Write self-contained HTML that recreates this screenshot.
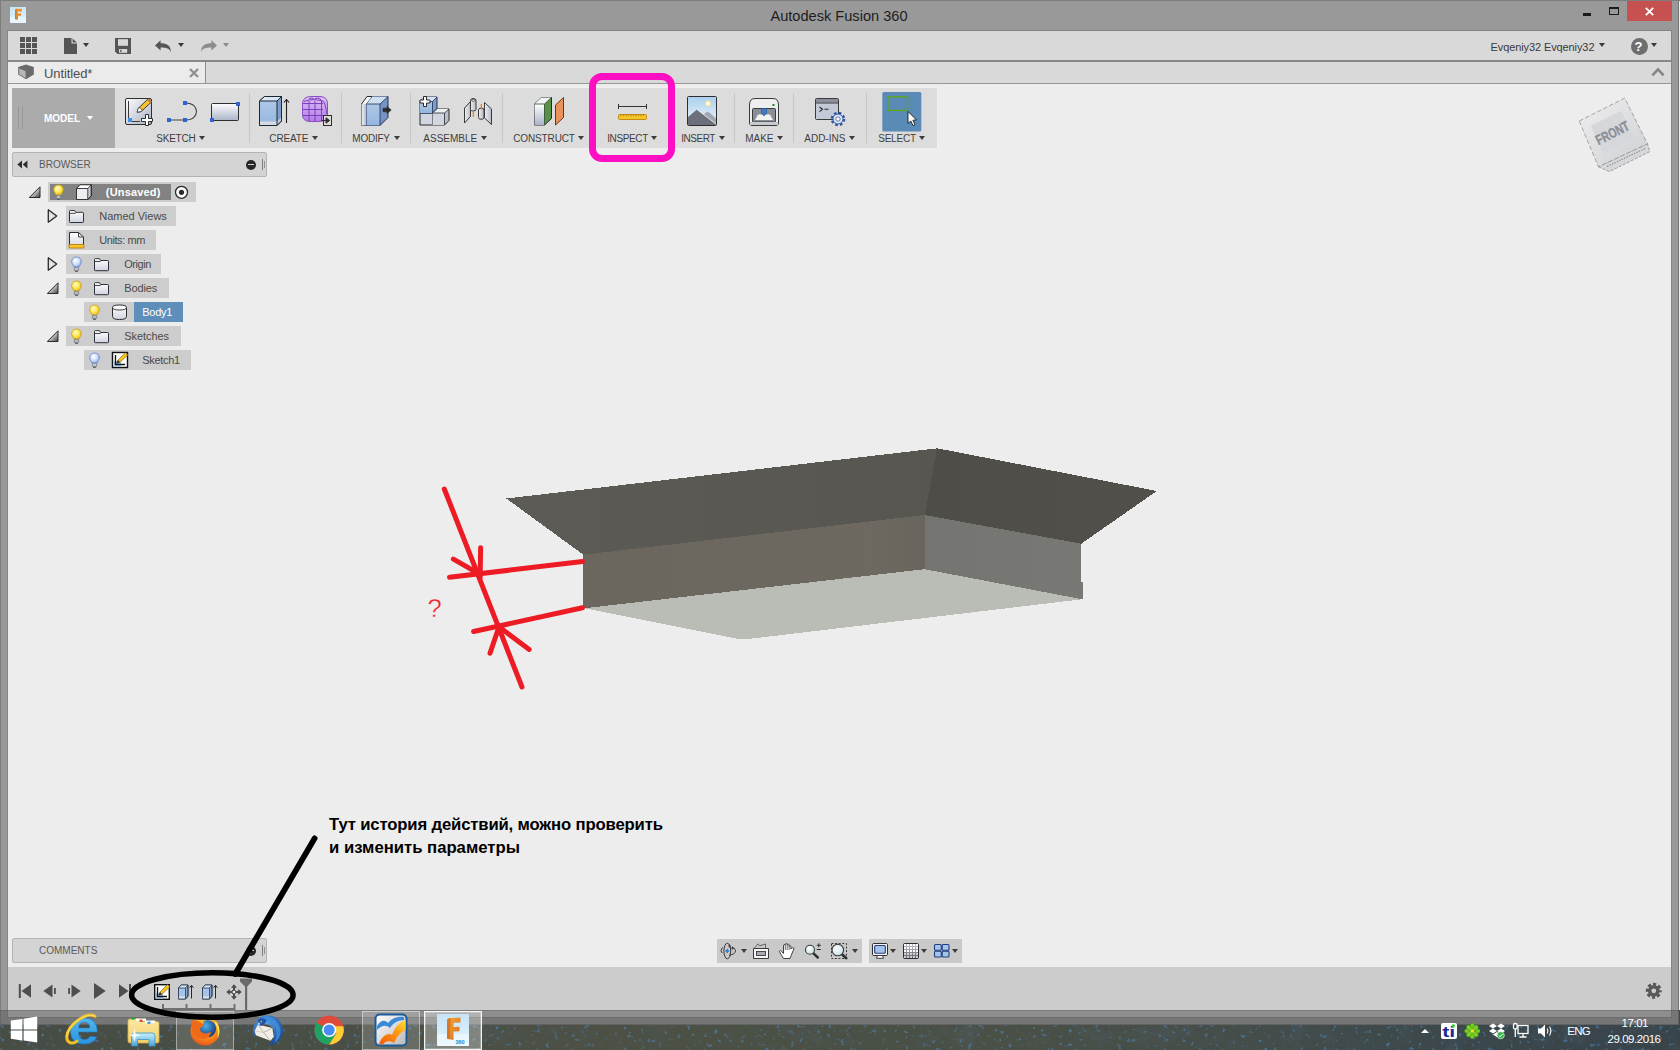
<!DOCTYPE html>
<html lang="en">
<head>
<meta charset="utf-8">
<title>Autodesk Fusion 360</title>
<style>
*{box-sizing:border-box;margin:0;padding:0}
html,body{width:1680px;height:1050px;overflow:hidden}
body{position:relative;background:#999999;font-family:"Liberation Sans",sans-serif;font-size:11px;color:#4a4a4a}
.abs{position:absolute}
.t{position:absolute;white-space:nowrap;line-height:1}
svg{position:absolute;overflow:visible}
/* window frame */
#edgeL{left:0;top:0;width:1px;height:1050px;background:#7d7d7d}
#edgeT{left:0;top:0;width:1680px;height:1px;background:#7d7d7d}
#edgeR{left:1679px;top:0;width:1px;height:1010px;background:#f0f1f5}
#edgeR2{left:1678px;top:0;width:1px;height:1025px;background:#727272}
#title{left:0;top:8.6px;width:1678px;text-align:center;font-size:14.6px;color:#1e1e1e}
#closeb{left:1627px;top:1px;width:45px;height:20px;background:#c75050}
/* content */
#content{left:7px;top:30px;width:1665px;height:988px;background:#ededed;border:1px solid #858585}
#qat{left:8px;top:31px;width:1663px;height:29px;background:#d9d9d9}
#qatline{left:8px;top:60px;width:1663px;height:2px;background:#888888}
#tabbar{left:8px;top:62px;width:1663px;height:21px;background:#d9d9d9}
#tab{left:8px;top:62px;width:198px;height:21px;background:#ebebeb;border-right:1px solid #8c8c8c}
#tabline{left:8px;top:83px;width:1663px;height:1px;background:#979797;box-shadow:0 1px 0 #f3f3f3}
#canvas{left:8px;top:84px;width:1663px;height:883px;background:#ededed}
#timeline{left:8px;top:967px;width:1663px;height:50px;background:#cccccc}
/* ribbon */
#ribbon{left:12px;top:88px;width:925px;height:60px;background:#dcdcdc;box-shadow:0 0 0 1px #f0f0f0}
#model{left:12px;top:88px;width:103px;height:60px;background:#ababab}
.sep{position:absolute;top:93px;width:1px;height:50px;background:#c6c6c6}
.rl{position:absolute;top:132.5px;font-size:10px;color:#3e3e3e;white-space:nowrap;line-height:12px}
.tri2{position:absolute;width:0;height:0;border-left:3.5px solid transparent;border-right:3.5px solid transparent;border-top:4px solid #3c3c3c}
.tri{position:absolute;width:0;height:0;border-left:3.7px solid transparent;border-right:3.7px solid transparent;border-top:4.8px solid #3c3c3c}
/* browser */
#browser{left:12px;top:152px;width:255px;height:25px;background:#d4d4d4;border:1px solid #b4b4b4;border-radius:2px}
.row{position:absolute;height:20px;background:#cdcdcd}
.rt{position:absolute;font-size:11px;color:#4a4a4a;white-space:nowrap;line-height:12px}
#comments{left:12px;top:938px;width:255px;height:25px;background:#d4d4d4;border:1px solid #b4b4b4;border-radius:2px}
.nav{position:absolute;top:939px;height:24px;background:#c9c9c9}
/* taskbar */
.tbtn{position:absolute;top:1011px;height:39px;width:58px;border:1px solid rgba(255,255,255,.45);background:rgba(255,255,255,.12)}
</style>
</head>
<body>
<!-- FRAME -->
<div class="abs" id="edgeR"></div><div class="abs" id="edgeR2"></div>
<div class="abs" id="edgeL"></div><div class="abs" id="edgeT"></div>
<div class="t" id="title">Autodesk Fusion 360</div>
<div class="abs" id="closeb"></div>
<div class="abs" id="content"></div>
<div class="abs" id="qat"></div>
<div class="abs" id="qatline"></div>
<div class="abs" id="tabbar"></div>
<div class="abs" id="tab"></div>
<div class="abs" id="tabline"></div>
<div class="abs" id="canvas"></div>
<div class="abs" id="timeline"></div>
<!--QAT-S-->
<!-- title icons -->
<svg style="left:10px;top:7px" width="16" height="16" viewBox="0 0 16 16">
 <defs><linearGradient id="fbg" x1="0" y1="0" x2="0" y2="1"><stop offset="0" stop-color="#c9e6f6"/><stop offset="0.6" stop-color="#d6edf8"/><stop offset="0.62" stop-color="#e6f4fb"/><stop offset="1" stop-color="#eaf6fc"/></linearGradient>
 <linearGradient id="fo" x1="0" y1="0" x2="1" y2="1"><stop offset="0" stop-color="#f6a63c"/><stop offset="1" stop-color="#d9761b"/></linearGradient></defs>
 <rect width="16" height="16" fill="url(#fbg)"/>
 <path d="M5 3.2 Q5 1.8 6.6 1.8 L11.8 1.8 L11.8 4.4 L8 4.4 L8 6.4 L11 6.4 L11 8.8 L8 8.8 L8 12.8 L5 12.2 Z" fill="url(#fo)"/>
 <path d="M5 3.2 Q5 1.8 6.6 1.8 L7 1.8 L6.2 12.45 L5 12.2 Z" fill="#c8661a" opacity=".55"/>
</svg>
<div class="abs" style="left:1583px;top:13px;width:8px;height:2.5px;background:#1a1a1a"></div>
<div class="abs" style="left:1609px;top:7px;width:10px;height:8px;border:1px solid #1a1a1a;border-top-width:2px"></div>
<svg style="left:1645px;top:7px" width="9" height="9" viewBox="0 0 9 9"><path d="M0.8 0.8 L8.2 8.2 M8.2 0.8 L0.8 8.2" stroke="#ffffff" stroke-width="1.9" fill="none"/></svg>
<!-- QAT -->
<svg style="left:20px;top:37px" width="17" height="17" viewBox="0 0 17 17" fill="#555555">
 <rect x="0" y="0" width="5" height="5"/><rect x="6" y="0" width="5" height="5"/><rect x="12" y="0" width="5" height="5"/>
 <rect x="0" y="6" width="5" height="5"/><rect x="6" y="6" width="5" height="5"/><rect x="12" y="6" width="5" height="5"/>
 <rect x="0" y="12" width="5" height="5"/><rect x="6" y="12" width="5" height="5"/><rect x="12" y="12" width="5" height="5"/>
</svg>
<svg style="left:64px;top:38px" width="13" height="16" viewBox="0 0 13 16"><path d="M0 0 H7.5 V5.5 H13 V16 H0 Z" fill="#555555"/><path d="M8.6 0.4 L12.8 4.5 H8.6 Z" fill="#555555"/></svg>
<div class="tri" style="left:83px;top:43.2px;border-top-color:#3a3a3a"></div>
<svg style="left:115px;top:38px" width="16" height="16" viewBox="0 0 16 16"><path d="M0 0 H16 V16 H2.6 L0 13.4 Z" fill="#555555"/><rect x="3" y="1.2" width="10" height="6.6" fill="#d9d9d9"/><rect x="4" y="11" width="8.2" height="3.8" fill="#d9d9d9"/><rect x="5.2" y="11.8" width="1.3" height="2.2" fill="#555555"/></svg>
<svg style="left:155px;top:39.5px" width="17" height="13" viewBox="0 0 17 13"><path d="M0 5.4 L5.6 0.2 V3.2 C11.5 3.2 16.2 5.2 15.8 12.4 C14.6 8.4 11.5 7.6 5.6 7.6 V10.6 Z" fill="#555555"/></svg>
<div class="tri" style="left:178px;top:43.2px;border-top-color:#3a3a3a"></div>
<svg style="left:199.5px;top:39.5px" width="17" height="13" viewBox="0 0 17 13"><path d="M17 5.4 L11.4 0.2 V3.2 C5.5 3.2 0.8 5.2 1.2 12.4 C2.4 8.4 5.5 7.6 11.4 7.6 V10.6 Z" fill="#8c8c8c"/></svg>
<div class="tri" style="left:223px;top:43.2px;border-top-color:#8c8c8c"></div>
<div class="t" style="left:1490.5px;top:40.5px;font-size:11px;color:#3a3a3a;line-height:12px;letter-spacing:-0.1px">Evqeniy32 Evqeniy32</div>
<div class="tri" style="left:1598.5px;top:43.2px;border-top-color:#3a3a3a"></div>
<div class="abs" style="left:1630.5px;top:37.5px;width:17px;height:17px;border-radius:50%;background:#6e6e6e"></div>
<div class="t" style="left:1634.6px;top:39.5px;font-size:13px;font-weight:bold;color:#ffffff;line-height:13px">?</div>
<div class="tri" style="left:1651px;top:43.2px;border-top-color:#3a3a3a"></div>
<svg style="left:1651px;top:67px" width="14" height="10" viewBox="0 0 14 10"><path d="M1.4 8.4 L7 2.4 L12.6 8.4" stroke="#858585" stroke-width="2.6" fill="none"/></svg>
<!-- tab -->
<svg style="left:18px;top:64px" width="16" height="16" viewBox="0 0 16 16"><path d="M0.2 3 L8 0.6 L15.8 3 V10.6 L8 15.2 L0.2 10.6 Z" fill="#6a6a6a"/><path d="M1.2 4.4 L7.6 7.2 V14 L1.2 10.2 Z" fill="#b5b7b5"/></svg>
<div class="t" style="left:44px;top:67px;font-size:13px;color:#4e4e4e;line-height:13px;letter-spacing:-0.1px">Untitled*</div>
<svg style="left:189px;top:68px" width="10" height="10" viewBox="0 0 10 10"><path d="M1 1 L9 9 M9 1 L1 9" stroke="#909090" stroke-width="2.4" fill="none"/></svg>
<!--QAT-E-->
<!--RIBBON-S-->
<div class="abs" id="ribbon"></div>
<div class="abs" id="model"></div>
<div class="abs" style="left:18px;top:106px;width:1px;height:23px;background:#989898"></div>
<div class="abs" style="left:22px;top:106px;width:1px;height:23px;background:#989898"></div>
<div class="t" style="left:44px;top:112.5px;font-size:10px;font-weight:bold;color:#ffffff;line-height:12px">MODEL</div>
<div class="tri2" style="left:86.5px;top:116px;border-top-color:#ffffff"></div>
<div class="sep" style="left:249px"></div><div class="sep" style="left:341px"></div><div class="sep" style="left:410px"></div><div class="sep" style="left:502px"></div>
<div class="sep" style="left:734px"></div><div class="sep" style="left:793px"></div><div class="sep" style="left:866px"></div>
<div class="rl" style="left:156.3px;letter-spacing:-0.23px">SKETCH</div><div class="tri2" style="left:198.5px;top:136px"></div>
<div class="rl" style="left:269.3px;letter-spacing:-0.13px">CREATE</div><div class="tri2" style="left:311.5px;top:136px"></div>
<div class="rl" style="left:352.3px;letter-spacing:-0.23px">MODIFY</div><div class="tri2" style="left:393.5px;top:136px"></div>
<div class="rl" style="left:423.3px">ASSEMBLE</div><div class="tri2" style="left:480.5px;top:136px"></div>
<div class="rl" style="left:513.2px;letter-spacing:-0.13px">CONSTRUCT</div><div class="tri2" style="left:577.5px;top:136px"></div>
<div class="rl" style="left:607.2px;letter-spacing:-0.37px">INSPECT</div><div class="tri2" style="left:650.5px;top:136px"></div>
<div class="rl" style="left:681.3px;letter-spacing:-0.50px">INSERT</div><div class="tri2" style="left:718.5px;top:136px"></div>
<div class="rl" style="left:745.2px">MAKE</div><div class="tri2" style="left:776.5px;top:136px"></div>
<div class="rl" style="left:804.3px">ADD-INS</div><div class="tri2" style="left:848.5px;top:136px"></div>
<div class="rl" style="left:878.2px;letter-spacing:-0.22px">SELECT</div><div class="tri2" style="left:918.5px;top:136px"></div>
<svg style="left:0;top:0" width="1680" height="160" viewBox="0 0 1680 160">
<defs>
 <linearGradient id="gw" x1="0" y1="0" x2="0" y2="1"><stop offset="0" stop-color="#ffffff"/><stop offset="1" stop-color="#aab3c8"/></linearGradient>
 <linearGradient id="gw2" x1="0" y1="0" x2="1" y2="1"><stop offset="0" stop-color="#fdfdfe"/><stop offset="1" stop-color="#a9b1c4"/></linearGradient>
 <linearGradient id="gb" x1="0" y1="0" x2="0" y2="1"><stop offset="0" stop-color="#adc8e6"/><stop offset="1" stop-color="#94b6de"/></linearGradient>
 <linearGradient id="gg" x1="0" y1="0" x2="1" y2="0"><stop offset="0" stop-color="#eef0f4"/><stop offset="1" stop-color="#b4bac8"/></linearGradient>
 <linearGradient id="gp" x1="0" y1="0" x2="0" y2="1"><stop offset="0" stop-color="#dcc0f6"/><stop offset="1" stop-color="#b57be6"/></linearGradient>
 <linearGradient id="gsky" x1="0" y1="0" x2="0" y2="1"><stop offset="0" stop-color="#a9d0ee"/><stop offset="1" stop-color="#eef6fb"/></linearGradient>
</defs>
<!-- SKETCH 1 -->
<rect x="125.5" y="98.5" width="26" height="26" rx="1.5" fill="url(#gw2)" stroke="#2e2e2e"/>
<path d="M128.5 101 V121.5 H140" stroke="#3a3a3a" stroke-width="1" fill="none"/>
<rect x="128" y="118" width="4" height="4" fill="#3d8fe6"/>
<path d="M137.2 112.2 L138 108.6 L148.4 98.6 L151.6 101.8 L141 111.6 Z" fill="#f6c32c" stroke="#2e2e2e" stroke-width=".9"/>
<path d="M137.2 112.2 L138 108.6 L140 107.4 L142 110.4 L141 111.6 Z" fill="#ffffff" stroke="#2e2e2e" stroke-width=".7"/>
<path d="M147 100 L148.6 98.4 L151.8 101.6 L150.2 103.2 Z" fill="#c9813a"/>
<path d="M145.5 114.5 h3 v4 h4 v3 h-4 v4 h-3 v-4 h-4 v-3 h4 z" fill="#ffffff" stroke="#2e2e2e" stroke-width="1"/>
<!-- SKETCH 2 -->
<path d="M169 120 H186 C200 120 200 103 186 103" stroke="#444444" stroke-width="1.1" fill="none"/>
<rect x="167" y="118" width="4" height="4" fill="#2f62d2"/><rect x="183" y="118" width="4" height="4" fill="#2f62d2"/><rect x="183" y="101" width="4" height="4" fill="#2f62d2"/>
<!-- SKETCH 3 -->
<rect x="211.5" y="103.5" width="27" height="17" rx="1" fill="url(#gw)" stroke="#2e2e2e"/>
<rect x="236" y="102" width="4" height="4" fill="#2f62d2"/><rect x="210" y="118" width="4" height="4" fill="#2f62d2"/>
<!-- CREATE 1 extrude -->
<path d="M259.5 101 L264.5 96.5 H281.5 V121 L277 125.5 H259.5 Z" fill="#7f9dc9" stroke="#1f2733" stroke-width="1" stroke-linejoin="round"/>
<path d="M259.5 101 L264.5 96.5 H281.5 L277 101 Z" fill="#d9e6f4"/>
<rect x="259.5" y="101" width="17.5" height="24.5" fill="url(#gb)"/>
<rect x="259.5" y="121.5" width="17.5" height="4" fill="#d5dae4"/>
<path d="M277 121.5 L281.5 117 V121 L277 125.5 Z" fill="#c3cad8"/>
<path d="M259.5 101 L264.5 96.5 H281.5 V121 L277 125.5 H259.5 Z M259.5 101 H277 L281.5 96.5 M277 101 V125.5" fill="none" stroke="#1f2733" stroke-width="1" stroke-linejoin="round"/>
<path d="M286.5 123 V100 M283.8 102.5 L286.5 99.6 L289.2 102.5" stroke="#222" stroke-width="1.1" fill="none"/>
<!-- CREATE 2 form -->
<path d="M302.5 104 Q302.5 96.5 311 96.5 H320 Q327.5 96.5 327.5 104 V114 Q327.5 121.5 319 121.5 H310 Q302.5 121.5 302.5 114 Z" fill="url(#gp)" stroke="#8a4fc8" stroke-width="1"/>
<path d="M303 103.5 H323 M303 109.5 H323 M303 115.5 H323 M309 101 V121 M315 101 V121 M321.5 101 V121 M304 101.5 Q312 98 323 101 Q326 104 326.5 114 M309 99 Q312 97 314 99 M315 98.5 Q318 97 321 99.5" stroke="#7a3fba" stroke-width="1" fill="none"/>
<rect x="323.5" y="115.5" width="8" height="10" fill="#dcdcdc" stroke="#2e2e2e" stroke-width="1"/>
<path d="M321.5 120.5 H326 M326 117.8 L329.6 120.5 L326 123.2 Z" stroke="#2e2e2e" stroke-width="1" fill="#2e2e2e"/>
<!-- MODIFY -->
<path d="M361.5 104 L367 96.5 H372 V118 L366.5 125.5 H361.5 Z" fill="#f4f5f8" stroke="#2a2a2a" stroke-width="1" stroke-linejoin="round"/>
<path d="M361.5 104 H366.5 V125.5 H361.5 Z" fill="url(#gg)"/>
<path d="M366.5 104 L372.5 96.5 H388 V117.5 L380 125.5 H366.5 Z" fill="#7594c4" stroke="#1f2f55" stroke-width="1" stroke-linejoin="round"/>
<path d="M366.5 104 L372.5 96.5 H388 L380 104 Z" fill="#cfe0f2"/>
<rect x="366.5" y="104" width="13.5" height="21.5" fill="url(#gb)"/>
<path d="M366.5 104 H380 L388 96.5 M380 104 V125.5" fill="none" stroke="#1f2f55" stroke-width=".8"/>
<path d="M383 108.2 H387 V106.4 L391.2 110 L387 113.6 V111.8 H383 Z" fill="#2b2b2b" stroke="#2b2b2b" stroke-width=".6"/>
<!-- ASSEMBLE 1 -->
<path d="M420 113 H432.5 V125 H420 Z" fill="#d2d6e0" stroke="#2a2a2a" stroke-width="1"/>
<path d="M432.5 113 L437 109 H449 V120.5 L444.5 125 H432.5 Z" fill="#b9bfcd" stroke="#2a2a2a" stroke-width="1" stroke-linejoin="round"/>
<path d="M432.5 113 L437 109 H449 L444.5 113 Z" fill="#eef0f4"/>
<rect x="432.5" y="113" width="12" height="12" fill="#d2d6e0"/>
<path d="M432.5 113 H444.5 L449 109 M444.5 113 V125" fill="none" stroke="#2a2a2a" stroke-width=".8"/>
<path d="M420 101.5 L424.5 97 H437 V108.5 L432.5 113 H420 Z" fill="#7f9dc9" stroke="#1f2f55" stroke-width="1" stroke-linejoin="round"/>
<path d="M420 101.5 L424.5 97 H437 L432.5 101.5 Z" fill="#d4e2f3"/>
<rect x="420" y="101.500" width="12.5" height="11.500" fill="url(#gb)"/>
<path d="M420 101.500 H432.500 L437 97 M432.500 101.500 V113" fill="none" stroke="#1f2f55" stroke-width=".8"/>
<path d="M423.500 96.500 h3 v3.500 h3.500 v3 h-3.500 v3.500 h-3 v-3.500 h-3.500 v-3 h3.500 z" fill="#ffffff" stroke="#2a2a2a" stroke-width="1"/>
<!-- ASSEMBLE 2 joint -->
<path d="M464.500 108 L470.500 101.500 V116.500 L464.500 123 Z" fill="url(#gg)" stroke="#3a3a3a" stroke-width="1" stroke-linejoin="round"/>
<path d="M470.500 100.500 Q470.500 98.500 473.200 98.500 Q476 98.500 476 100.500 V109.500 Q476 111 473.200 111 Q470.500 111 470.500 109.500 Z" fill="url(#gg)" stroke="#3a3a3a" stroke-width="1"/>
<ellipse cx="473.250" cy="100.300" rx="1.700" ry="1" fill="#fff" stroke="#3a3a3a" stroke-width=".8"/>
<path d="M473.300 111.500 V117" stroke="#f07b10" stroke-width="1.200"/>
<path d="M478.500 110 Q478.500 108 481.200 108 Q484 108 484 110 V117.500 Q484 119.300 481.200 119.300 Q478.500 119.300 478.500 117.500 Z" fill="url(#gg)" stroke="#3a3a3a" stroke-width="1"/>
<path d="M481.300 104 V109.500" stroke="#f07b10" stroke-width="1.200"/>
<path d="M484.500 102.500 L491.500 109 V124.500 L484.500 118 Z" fill="url(#gg)" stroke="#3a3a3a" stroke-width="1" stroke-linejoin="round"/>
<!-- CONSTRUCT -->
<path d="M534.500 104 L541.500 97.500 H551.500 V118.500 L544.500 125 H534.500 Z" fill="#5a9048" stroke="#2a2a2a" stroke-width="1" stroke-linejoin="round"/>
<path d="M534.500 104 L541.500 97.500 H551.500 L544.500 104 Z" fill="#f2f3f6"/>
<rect x="534.500" y="104" width="10" height="21" fill="url(#gw)"/>
<path d="M534.500 104 H544.500 L551.500 97.500 M544.500 104 V125" fill="none" stroke="#2a4a22" stroke-width=".8"/>
<path d="M555.500 105 L563.500 97.500 V117.500 L555.500 125 Z" fill="#e9935a" stroke="#7a3010" stroke-width="1" stroke-linejoin="round"/>
<!-- INSPECT -->
<path d="M618.500 104 V109 M646.500 104 V109 M618.500 106.500 H646.500" stroke="#333333" stroke-width="1" fill="none"/>
<rect x="618.500" y="114.500" width="28" height="5" rx="1" fill="#f3c62c" stroke="#c88a10" stroke-width="1"/>
<path d="M621 114.500 v2 M623.500 114.500 v1.500 M626 114.500 v2 M628.500 114.500 v1.500 M631 114.500 v2 M633.500 114.500 v1.500 M636 114.500 v2 M638.500 114.500 v1.500 M641 114.500 v2 M643.500 114.500 v1.500" stroke="#b5780a" stroke-width=".8"/>
<!-- INSERT -->
<rect x="687.500" y="96.500" width="29" height="29" rx="1" fill="url(#gsky)" stroke="#2e2e2e" stroke-width="1"/>
<circle cx="708" cy="103.500" r="2.700" fill="#fffbe2" stroke="#f0d88a" stroke-width="1"/>
<path d="M700 118 L707 111.500 L710 113 L716 118.500 V125 H700 Z" fill="#a0a6b2"/>
<path d="M688 125 V117 L697 109.500 L716 124 V125 Z" fill="#6c707c"/>
<path d="M697 109.500 L716 124" stroke="#e8e8e8" stroke-width="1"/>
<!-- MAKE -->
<path d="M749.500 105 Q749.500 98.500 755 98.500 H773 Q778.500 98.500 778.500 105 V123 Q778.500 125.500 776 125.500 H752 Q749.500 125.500 749.500 123 Z" fill="#eceef0" stroke="#3a3a3a" stroke-width="1"/>
<rect x="752.500" y="108.500" width="23" height="13.500" rx="1" fill="#8a8e96" stroke="#3a3a3a" stroke-width="1"/>
<path d="M755 120 L758 114.500 H770 L773 120 Z" fill="#f2f2f2"/>
<path d="M761.500 108.500 V113 L764 116 L766.500 113 V108.500 Z" fill="#3d7bc8" stroke="#1f4f90" stroke-width=".6"/>
<rect x="772.500" y="104" width="2" height="2" fill="#1a8a1a"/>
<rect x="750" y="122" width="28" height="3" fill="#c6c9ce"/>
<!-- ADD-INS -->
<rect x="815.500" y="98.500" width="23" height="21" rx="1" fill="#c4c9d6" stroke="#3a3a3a" stroke-width="1"/>
<rect x="816" y="99" width="22" height="3.500" fill="#8c909c"/>
<path d="M816 103 H838.500" stroke="#3a3a3a" stroke-width="1"/>
<path d="M819.500 107 L822.500 109.300 L819.500 111.600 M824.500 109.300 H828.500" stroke="#2a2a2a" stroke-width="1.100" fill="none"/>
<circle cx="838" cy="119" r="5" fill="#dfe8f6" stroke="#2f55a0" stroke-width="1"/>
<circle cx="838" cy="119" r="6.200" fill="none" stroke="#2f55a0" stroke-width="2.200" stroke-dasharray="2.600 2.270"/>
<circle cx="838" cy="119" r="2.200" fill="#ffffff" stroke="#2f55a0" stroke-width=".8"/>
<!-- SELECT -->
<rect x="882.300" y="92" width="39" height="39.500" rx="1.500" fill="#5a8ab6"/>
<rect x="887.800" y="96.800" width="19.800" height="13.600" fill="none" stroke="#5aaa0c" stroke-width="1.300"/>
<path d="M908 111.500 V123.500 L910.800 121 L913 125.600 L915 124.700 L912.900 120.200 L916.500 120 Z" fill="#ffffff" stroke="#1a1a1a" stroke-width=".9" stroke-linejoin="round"/>
</svg>
<!--RIBBON-E-->
<!--BROWSER-S-->
<div class="abs" id="browser"></div>
<svg style="left:17px;top:160px" width="11" height="9" viewBox="0 0 11 9"><path d="M5 0.600 V8.400 L0.300 4.500 Z M10.400 0.600 V8.400 L5.700 4.500 Z" fill="#2e2e2e"/></svg>
<div class="t" style="left:39px;top:158.500px;font-size:10px;color:#5a5a5a;line-height:12px">BROWSER</div>
<div class="abs" style="left:245.500px;top:159.500px;width:10px;height:10px;border-radius:50%;background:#262626"></div>
<div class="abs" style="left:247.500px;top:163.700px;width:6px;height:1.600px;background:#d4d4d4"></div>
<div class="abs" style="left:262px;top:159px;width:1px;height:11px;background:#7e7e7e"></div>
<div class="abs" style="left:264px;top:161px;width:1px;height:7px;background:#909090"></div>
<!-- rows -->
<div class="row" style="left:48px;top:182px;width:148px"></div>
<div class="abs" style="left:50px;top:184px;width:121px;height:16px;background:#828282"></div>
<div class="row" style="left:66px;top:206px;width:110px"></div>
<div class="row" style="left:66px;top:230px;width:90px"></div>
<div class="row" style="left:66px;top:254px;width:95px"></div>
<div class="row" style="left:66px;top:278px;width:103px"></div>
<div class="row" style="left:84px;top:302px;width:99px"></div>
<div class="abs" style="left:134px;top:302px;width:49px;height:20px;background:#5d8fba"></div>
<div class="row" style="left:66px;top:326px;width:115px"></div>
<div class="row" style="left:84px;top:350px;width:107px"></div>
<div class="rt" style="left:105.800px;top:186px;font-weight:bold;color:#ffffff;letter-spacing:0.17px">(Unsaved)</div>
<div class="rt" style="left:99.200px;top:210px">Named Views</div>
<div class="rt" style="left:99.200px;top:234px;letter-spacing:-0.42px">Units: mm</div>
<div class="rt" style="left:124.200px;top:258px;letter-spacing:-0.42px">Origin</div>
<div class="rt" style="left:124.200px;top:282px;letter-spacing:-0.12px">Bodies</div>
<div class="rt" style="left:142.200px;top:306px;color:#ffffff;letter-spacing:-0.25px">Body1</div>
<div class="rt" style="left:124.200px;top:330px;letter-spacing:-0.05px">Sketches</div>
<div class="rt" style="left:142.200px;top:354px;letter-spacing:-0.30px">Sketch1</div>
<svg style="left:0;top:0" width="300" height="380" viewBox="0 0 300 380">
<defs>
 <linearGradient id="tg" x1="0" y1="0" x2="1" y2="1"><stop offset="0.350" stop-color="#f0f0f0"/><stop offset="1" stop-color="#3c3c3c"/></linearGradient>
 <radialGradient id="by" cx="0.400" cy="0.350" r="0.700"><stop offset="0" stop-color="#fffbd0"/><stop offset="0.500" stop-color="#ffe85a"/><stop offset="1" stop-color="#e8b818"/></radialGradient>
 <radialGradient id="bb" cx="0.400" cy="0.350" r="0.700"><stop offset="0" stop-color="#ffffff"/><stop offset="0.550" stop-color="#cfe0fb"/><stop offset="1" stop-color="#86a8e8"/></radialGradient>
 <linearGradient id="fg" x1="0" y1="0" x2="0" y2="1"><stop offset="0" stop-color="#ffffff"/><stop offset="1" stop-color="#d0d4e0"/></linearGradient>
</defs>
<g transform="translate(28.5 186)"><path d="M11.500 0.800 V11.500 H0.800 Z" fill="url(#tg)" stroke="#2a2a2a" stroke-width="1" stroke-linejoin="round"/></g>
<g transform="translate(47.5 209)"><path d="M0.800 0.800 V13.200 L9.200 7 Z" fill="#e4e4e4" stroke="#2a2a2a" stroke-width="1.300" stroke-linejoin="round"/></g>
<g transform="translate(47.5 257)"><path d="M0.800 0.800 V13.200 L9.200 7 Z" fill="#e4e4e4" stroke="#2a2a2a" stroke-width="1.300" stroke-linejoin="round"/></g>
<g transform="translate(46.5 282)"><path d="M11.500 0.800 V11.500 H0.800 Z" fill="url(#tg)" stroke="#2a2a2a" stroke-width="1" stroke-linejoin="round"/></g>
<g transform="translate(46.5 330)"><path d="M11.500 0.800 V11.500 H0.800 Z" fill="url(#tg)" stroke="#2a2a2a" stroke-width="1" stroke-linejoin="round"/></g>
<g transform="translate(53 184.5)"><path d="M5.500 0.500 C8.400 0.500 10.300 2.600 10.300 5.200 C10.300 7.400 8.600 8.600 7.900 10.600 H3.100 C2.400 8.600 0.700 7.400 0.700 5.200 C0.700 2.600 2.600 0.500 5.500 0.500 Z" fill="url(#by)" stroke="#c89a10" stroke-width=".8"/><rect x="3.300" y="10.800" width="4.400" height="3.400" rx=".8" fill="#b8bcc4" stroke="#6a6e78" stroke-width=".7"/><rect x="4.200" y="14.200" width="2.600" height="1.200" fill="#55585e"/></g>
<g transform="translate(71 256.5)"><path d="M5.500 0.500 C8.400 0.500 10.300 2.600 10.300 5.200 C10.300 7.400 8.600 8.600 7.900 10.600 H3.100 C2.400 8.600 0.700 7.400 0.700 5.200 C0.700 2.600 2.600 0.500 5.500 0.500 Z" fill="url(#bb)" stroke="#5a80d0" stroke-width=".8"/><rect x="3.300" y="10.800" width="4.400" height="3.400" rx=".8" fill="#c4c8d0" stroke="#6a6e78" stroke-width=".7"/><rect x="4.200" y="14.200" width="2.600" height="1.200" fill="#55585e"/></g>
<g transform="translate(71 280.5)"><path d="M5.500 0.500 C8.400 0.500 10.300 2.600 10.300 5.200 C10.300 7.400 8.600 8.600 7.900 10.600 H3.100 C2.400 8.600 0.700 7.400 0.700 5.200 C0.700 2.600 2.600 0.500 5.500 0.500 Z" fill="url(#by)" stroke="#c89a10" stroke-width=".8"/><rect x="3.300" y="10.800" width="4.400" height="3.400" rx=".8" fill="#b8bcc4" stroke="#6a6e78" stroke-width=".7"/><rect x="4.200" y="14.200" width="2.600" height="1.200" fill="#55585e"/></g>
<g transform="translate(89 304.5)"><path d="M5.500 0.500 C8.400 0.500 10.300 2.600 10.300 5.200 C10.300 7.400 8.600 8.600 7.900 10.600 H3.100 C2.400 8.600 0.700 7.400 0.700 5.200 C0.700 2.600 2.600 0.500 5.500 0.500 Z" fill="url(#by)" stroke="#c89a10" stroke-width=".8"/><rect x="3.300" y="10.800" width="4.400" height="3.400" rx=".8" fill="#b8bcc4" stroke="#6a6e78" stroke-width=".7"/><rect x="4.200" y="14.200" width="2.600" height="1.200" fill="#55585e"/></g>
<g transform="translate(71 328.5)"><path d="M5.500 0.500 C8.400 0.500 10.300 2.600 10.300 5.200 C10.300 7.400 8.600 8.600 7.900 10.600 H3.100 C2.400 8.600 0.700 7.400 0.700 5.200 C0.700 2.600 2.600 0.500 5.500 0.500 Z" fill="url(#by)" stroke="#c89a10" stroke-width=".8"/><rect x="3.300" y="10.800" width="4.400" height="3.400" rx=".8" fill="#b8bcc4" stroke="#6a6e78" stroke-width=".7"/><rect x="4.200" y="14.200" width="2.600" height="1.200" fill="#55585e"/></g>
<g transform="translate(89 352.5)"><path d="M5.500 0.500 C8.400 0.500 10.300 2.600 10.300 5.200 C10.300 7.400 8.600 8.600 7.900 10.600 H3.100 C2.400 8.600 0.700 7.400 0.700 5.200 C0.700 2.600 2.600 0.500 5.500 0.500 Z" fill="url(#bb)" stroke="#5a80d0" stroke-width=".8"/><rect x="3.300" y="10.800" width="4.400" height="3.400" rx=".8" fill="#c4c8d0" stroke="#6a6e78" stroke-width=".7"/><rect x="4.200" y="14.200" width="2.600" height="1.200" fill="#55585e"/></g>
<g transform="translate(69 210)"><path d="M0.500 1.300 Q0.500 0.500 1.300 0.500 H5.600 L6.600 2.300 H13.700 Q14.500 2.300 14.500 3.100 V11.700 Q14.500 12.500 13.700 12.500 H1.300 Q0.500 12.500 0.500 11.700 Z" fill="url(#fg)" stroke="#2c3038" stroke-width="1"/><path d="M0.500 3.300 H6.600" stroke="#2c3038" stroke-width=".9"/></g>
<g transform="translate(94 258.2)"><path d="M0.500 1.300 Q0.500 0.500 1.300 0.500 H5.600 L6.600 2.300 H13.700 Q14.500 2.300 14.500 3.100 V11.700 Q14.500 12.500 13.700 12.500 H1.300 Q0.500 12.500 0.500 11.700 Z" fill="url(#fg)" stroke="#2c3038" stroke-width="1"/><path d="M0.500 3.300 H6.600" stroke="#2c3038" stroke-width=".9"/></g>
<g transform="translate(94 282.2)"><path d="M0.500 1.300 Q0.500 0.500 1.300 0.500 H5.600 L6.600 2.300 H13.700 Q14.500 2.300 14.500 3.100 V11.700 Q14.500 12.500 13.700 12.500 H1.300 Q0.500 12.500 0.500 11.700 Z" fill="url(#fg)" stroke="#2c3038" stroke-width="1"/><path d="M0.500 3.300 H6.600" stroke="#2c3038" stroke-width=".9"/></g>
<g transform="translate(94 330.2)"><path d="M0.500 1.300 Q0.500 0.500 1.300 0.500 H5.600 L6.600 2.300 H13.700 Q14.500 2.300 14.500 3.100 V11.700 Q14.500 12.500 13.700 12.500 H1.300 Q0.500 12.500 0.500 11.700 Z" fill="url(#fg)" stroke="#2c3038" stroke-width="1"/><path d="M0.500 3.300 H6.600" stroke="#2c3038" stroke-width=".9"/></g>
<!-- root cube -->
<path d="M76.500 188.500 L80 184.800 H91.300 V195.800 L87.800 199.500 H76.500 Z" fill="#c9cdd6" stroke="#2e2e2e" stroke-width="1" stroke-linejoin="round"/>
<path d="M76.500 188.500 L80 184.800 H91.300 L87.800 188.500 Z" fill="#ffffff"/><rect x="76.500" y="188.500" width="11.300" height="11" fill="#eceef2"/>
<path d="M76.500 188.500 H87.800 L91.300 184.800 M87.800 188.500 V199.500 M76.500 188.500 L80 184.800 H91.300 V195.800 L87.800 199.500 H76.500 Z" fill="none" stroke="#2e2e2e" stroke-width=".9" stroke-linejoin="round"/>
<!-- radio -->
<circle cx="181.500" cy="192.300" r="6" fill="#ffffff" stroke="#2a2a2a" stroke-width="1.300"/><circle cx="181.500" cy="192.300" r="2.600" fill="#2a2a2a"/>
<!-- units page -->
<path d="M69.500 232.500 H78.500 L83.500 237 V247.500 H69.500 Z" fill="url(#fg)" stroke="#2e2e2e" stroke-width="1" stroke-linejoin="round"/><path d="M78.500 232.500 V237 H83.500" fill="none" stroke="#2e2e2e" stroke-width=".9"/>
<rect x="69" y="244.500" width="15" height="3.500" rx="1" fill="#f4c628" stroke="#c07a08" stroke-width=".9"/>
<!-- body cylinder -->
<path d="M112.500 307.500 Q112.500 305 119.500 305 Q126.500 305 126.500 307.500 V316.500 Q126.500 319.500 119.500 319.500 Q112.500 319.500 112.500 316.500 Z" fill="url(#fg)" stroke="#2e2e2e" stroke-width="1"/>
<path d="M112.500 307.500 Q112.500 310 119.500 310 Q126.500 310 126.500 307.500" fill="none" stroke="#2e2e2e" stroke-width=".9"/>
<!-- sketch icon -->
<rect x="112.500" y="352.500" width="15" height="15" fill="#ffffff" stroke="#111" stroke-width="1.400"/>
<rect x="114" y="361" width="7" height="5.500" fill="#9ec8f2"/>
<path d="M115.500 355 V364.500 H125" stroke="#111" stroke-width="1.300" fill="none"/>
<path d="M116.500 363.500 L118 360 L125.500 352.800 L127.800 355 L120 362.300 Z" fill="#f5c21e" stroke="#7a5a10" stroke-width=".6"/>
<path d="M116.500 363.500 L118 360 L120 362.300 Z" fill="#2a2a2a"/>
</svg>
<!-- comments -->
<div class="abs" id="comments"></div>
<div class="t" style="left:39px;top:944.500px;font-size:10px;color:#5a5a5a;line-height:12px">COMMENTS</div>
<div class="abs" style="left:245.500px;top:945.500px;width:10px;height:10px;border-radius:50%;background:#262626"></div>
<div class="abs" style="left:247.500px;top:949.700px;width:6px;height:1.600px;background:#d4d4d4"></div>
<div class="abs" style="left:249.700px;top:947.500px;width:1.600px;height:6px;background:#d4d4d4"></div>
<div class="abs" style="left:262px;top:945px;width:1px;height:11px;background:#7e7e7e"></div>
<div class="abs" style="left:264px;top:947px;width:1px;height:7px;background:#909090"></div>
<!--BROWSER-E-->
<!--MODEL3D-S-->
<svg style="left:0;top:0" width="1680" height="1050" viewBox="0 0 1680 1050" shape-rendering="crispEdges">
<defs>
 <linearGradient id="m1" x1="506" y1="0" x2="937" y2="0" gradientUnits="userSpaceOnUse"><stop offset="0" stop-color="#5c5b55"/><stop offset="1" stop-color="#575650"/></linearGradient>
 <linearGradient id="m2" x1="925" y1="0" x2="1157" y2="0" gradientUnits="userSpaceOnUse"><stop offset="0" stop-color="#4f4d48"/><stop offset="1" stop-color="#53504b"/></linearGradient>
 <linearGradient id="m3" x1="583" y1="0" x2="925" y2="0" gradientUnits="userSpaceOnUse"><stop offset="0" stop-color="#6b675f"/><stop offset="0.850" stop-color="#6d6960"/><stop offset="1" stop-color="#69655d"/></linearGradient>
 <linearGradient id="m4" x1="925" y1="0" x2="1083" y2="0" gradientUnits="userSpaceOnUse"><stop offset="0" stop-color="#747570"/><stop offset="1" stop-color="#787974"/></linearGradient>
</defs>
<path d="M583.500 608 L924.500 569 L1082.800 599.200 L750 638.800 L737.500 638.800 Z" fill="#babdb6"/>
<path d="M506.300 498.500 L937.300 448.300 L924.500 515 L583.300 554.700 Z" fill="url(#m1)"/>
<path d="M937.300 448.300 L1156.800 491 L1081.300 543.700 L924.500 515 Z" fill="url(#m2)"/>
<path d="M583.300 554.700 L924.500 515 L924.500 569.200 L583.300 608.400 Z" fill="url(#m3)"/>
<path d="M924.500 515 L1081.300 543.700 L1081.300 582 L1082.800 582 L1082.800 599.400 L924.500 569.200 Z" fill="url(#m4)"/>
</svg>
<!--MODEL3D-E-->
<!--CUBE-S-->
<svg style="left:1570px;top:90px" width="90" height="90" viewBox="1570 90 90 90">
<defs><linearGradient id="vc" x1="0" y1="0" x2="1" y2="1"><stop offset="0" stop-color="#efefef"/><stop offset="1" stop-color="#cdcfd3"/></linearGradient></defs>
<path d="M1598.400 166.700 L1609.400 171.600 L1649.700 151.700 L1647.500 143.800 Z" fill="#d6d7da" stroke="#8a8a8a" stroke-width=".8" stroke-dasharray="3 1.500"/>
<path d="M1579.300 121 L1624.700 98.100 L1647.500 143.800 L1598.400 166.700 Z" fill="url(#vc)" stroke="#909090" stroke-width=".8" stroke-dasharray="4.500 2.200"/>
<path d="M1591 125.600 L1621.400 111 L1633.800 138.800 L1603 153.800 Z" fill="#d5d7db"/>
<path d="M1607 166.500 L1645 148.500" stroke="#8a8c92" stroke-width="1.100" stroke-dasharray="1.500 1.200"/>
<text transform="translate(1598.600 145.200) rotate(-26.500) scale(0.740 1)" font-family="'Liberation Sans',sans-serif" font-weight="bold" font-size="14" fill="#8b8f97" stroke="#8b8f97" stroke-width=".35">FRONT</text>
</svg>
<!--CUBE-E-->
<!--NAVBAR-S-->
<div class="nav" style="left:717px;width:145px"></div>
<div class="nav" style="left:869px;width:93px"></div>
<div class="tri2" style="left:741px;top:949.300px;border-left-width:3.200px;border-right-width:3.200px"></div>
<div class="tri2" style="left:851.800px;top:949.300px;border-left-width:3.200px;border-right-width:3.200px"></div>
<div class="tri2" style="left:890.200px;top:949.300px;border-left-width:3.200px;border-right-width:3.200px"></div>
<div class="tri2" style="left:921px;top:949.300px;border-left-width:3.200px;border-right-width:3.200px"></div>
<div class="tri2" style="left:952px;top:949.300px;border-left-width:3.200px;border-right-width:3.200px"></div>
<svg style="left:0;top:930px" width="1680" height="40" viewBox="0 930 1680 40">
<defs>
 <radialGradient id="lens" cx="0.400" cy="0.350" r="0.800"><stop offset="0" stop-color="#ffffff"/><stop offset="1" stop-color="#b8dbe0"/></radialGradient>
 <linearGradient id="gridg2" x1="0" y1="0" x2="0" y2="1"><stop offset="0" stop-color="#c4c6cc"/><stop offset="1" stop-color="#666a74"/></linearGradient>
</defs>
<!-- orbit -->
<ellipse cx="727.300" cy="951" rx="3.400" ry="7.800" fill="none" stroke="#3a3a3a" stroke-width="1"/>
<path d="M722.500 947.500 Q719.500 951 722.300 953.200 M729 955.200 Q735.500 954.500 735.500 950.500 Q735 948 732.500 947.800" fill="none" stroke="#3a3a3a" stroke-width="1"/>
<path d="M729.500 944.500 v3 M728 946 h3 M732.500 946.500 v3 M731 948 h3" stroke="#3a3a3a" stroke-width=".9"/>
<path d="M727.300 949 V953 M725.300 951 H729.300" stroke="#1e7fe0" stroke-width="1.500"/>
<!-- look at -->
<path d="M753.500 948.500 H768.500 V958.500 H753.500 Z" fill="#f6f6f6" stroke="#3a3a3a" stroke-width="1"/>
<rect x="756.500" y="951.500" width="9" height="4" fill="#a6aab4" stroke="#3a3a3a" stroke-width=".9"/>
<path d="M754.500 948 L758 943.800 L759.500 945.800 L765.500 944 V948" fill="#c8c8c8" stroke="#5a5a5a" stroke-width=".9"/>
<!-- hand -->
<path d="M783.500 958.500 C781.500 955 780.500 953.500 779.500 951.800 C779 950.600 780.500 950 781.500 951.200 L783.500 953.500 V945.500 C783.500 944.200 785.300 944.200 785.300 945.500 V944.500 C785.300 943.200 787.200 943.200 787.200 944.500 V945 C787.200 943.800 789.100 943.800 789.100 945 V946.500 C789.100 945.400 790.900 945.400 790.900 946.500 V949 C792.500 947 794.500 947.500 793.800 949 C793 951 791.500 954.500 790 958.500 Z" fill="#ffffff" stroke="#2e2e2e" stroke-width=".9" stroke-linejoin="round"/>
<path d="M785.300 945.500 V950 M787.200 945 V950 M789.100 946.500 V950" stroke="#2e2e2e" stroke-width=".7"/>
<!-- zoom -->
<path d="M813.200 953.200 L817.800 957.500" stroke="#2e2e2e" stroke-width="2.400" stroke-linecap="round"/>
<circle cx="810" cy="949.800" r="4.500" fill="url(#lens)" stroke="#3a3a3a" stroke-width="1.100"/>
<path d="M818.800 943.300 V947.300 M816.800 945.300 H820.800 M816.800 949.500 H820.800" stroke="#2e2e2e" stroke-width="1"/>
<!-- zoom window -->
<rect x="831.500" y="943.500" width="15" height="15" fill="none" stroke="#3a3a3a" stroke-width="1" stroke-dasharray="2 1.600"/>
<path d="M842 954.200 L846.300 958.200" stroke="#2e2e2e" stroke-width="2.600" stroke-linecap="round"/>
<circle cx="837.800" cy="950" r="5.800" fill="url(#lens)" stroke="#3a3a3a" stroke-width="1.100"/>
<!-- display -->
<rect x="872.500" y="943.500" width="15" height="12" rx="1.200" fill="#f4f4f4" stroke="#2e2e2e" stroke-width="1"/>
<rect x="874.700" y="945.500" width="10.600" height="7.800" rx="1" fill="#a6c4ea" stroke="#1f3f80" stroke-width="1.100"/>
<path d="M877.500 955.500 H882.500 L883.500 958.300 H876.500 Z" fill="#ffffff" stroke="#2e2e2e" stroke-width=".9"/>
<!-- grid -->
<rect x="903.500" y="943.500" width="15" height="15" rx="1.200" fill="url(#gridg2)" stroke="#2e2e2e" stroke-width="1"/>
<path d="M904 944 h2 v2 h-2 Z M907 944 h2 v2 h-2 Z M910 944 h2 v2 h-2 Z M913 944 h2 v2 h-2 Z M916 944 h2 v2 h-2 Z M904 947 h2 v2 h-2 Z M907 947 h2 v2 h-2 Z M910 947 h2 v2 h-2 Z M913 947 h2 v2 h-2 Z M916 947 h2 v2 h-2 Z M904 950 h2 v2 h-2 Z M907 950 h2 v2 h-2 Z M910 950 h2 v2 h-2 Z M913 950 h2 v2 h-2 Z M916 950 h2 v2 h-2 Z M904 953 h2 v2 h-2 Z M907 953 h2 v2 h-2 Z M910 953 h2 v2 h-2 Z M913 953 h2 v2 h-2 Z M916 953 h2 v2 h-2 Z M904 956 h2 v2 h-2 Z M907 956 h2 v2 h-2 Z M910 956 h2 v2 h-2 Z M913 956 h2 v2 h-2 Z M916 956 h2 v2 h-2 Z" fill="#ffffff" opacity=".95"/>
<rect x="904" y="952.500" width="14" height="5.500" fill="#6a6e78" opacity=".3"/>
<!-- viewports -->
<rect x="934.500" y="944.500" width="6.800" height="5.800" rx="1" fill="#a6c4ea" stroke="#1f3f80" stroke-width="1.100"/>
<rect x="942.200" y="944.500" width="6.800" height="5.800" rx="1" fill="#a6c4ea" stroke="#1f3f80" stroke-width="1.100"/>
<rect x="934.500" y="951.200" width="6.800" height="5.800" rx="1" fill="#a6c4ea" stroke="#1f3f80" stroke-width="1.100"/>
<rect x="942.200" y="951.200" width="6.800" height="5.800" rx="1" fill="#a6c4ea" stroke="#1f3f80" stroke-width="1.100"/>
</svg>
<!--NAVBAR-E-->
<!--TIMELINE-S-->
<svg style="left:0;top:970px" width="1680" height="50" viewBox="0 970 1680 50">
<g fill="#4e4e4e">
<rect x="18.800" y="984" width="2" height="14"/><path d="M31 984.300 V997.700 L21.500 991 Z"/>
<path d="M52.500 984.500 V997.500 L43.300 991 Z"/><rect x="54" y="988" width="1.800" height="6"/>
<rect x="68.200" y="988" width="1.800" height="6"/><path d="M71.500 984.500 V997.500 L80.700 991 Z"/>
<path d="M94 983 V999 L105.700 991 Z"/>
<path d="M119 984.300 V997.700 L128.500 991 Z"/><rect x="129" y="984" width="2" height="14"/>
</g>
<!-- history items -->
<rect x="154.700" y="984.700" width="14.600" height="14.600" fill="#ffffff" stroke="#111" stroke-width="1.400"/>
<rect x="156" y="993" width="7" height="5.500" fill="#9ec8f2"/>
<path d="M157.500 987 V996.500 H167" stroke="#111" stroke-width="1.300" fill="none"/>
<path d="M158.500 995.500 L160 992 L167.500 984.500 L169.800 986.800 L162 994.300 Z" fill="#f5c21e" stroke="#7a5a10" stroke-width=".6"/>
<path d="M158.500 995.500 L160 992 L162 994.300 Z" fill="#2a2a2a"/>
<g id="ext1">
<path d="M178.500 988 L181 985 H188 V996 L185.500 999 H178.500 Z" fill="#86a6d2" stroke="#2a3a55" stroke-width=".9" stroke-linejoin="round"/>
<path d="M178.500 988 L181 985 H188 L185.500 988 Z" fill="#dce8f6"/><rect x="178.500" y="988" width="7" height="11" fill="#a8c4e6"/><rect x="178.500" y="996.500" width="7" height="2.500" fill="#dde2ea"/>
<path d="M178.500 988 H185.500 L188 985 M185.500 988 V999 M178.500 988 L181 985 H188 V996 L185.500 999 H178.500 Z" fill="none" stroke="#2a3a55" stroke-width=".8" stroke-linejoin="round"/>
<path d="M191.500 998.500 V985.500 M189.500 987.800 L191.500 985.300 L193.500 987.800" stroke="#2a2a2a" stroke-width="1" fill="none"/>
</g>
<g transform="translate(24 0)">
<path d="M178.500 988 L181 985 H188 V996 L185.500 999 H178.500 Z" fill="#86a6d2" stroke="#2a3a55" stroke-width=".9" stroke-linejoin="round"/>
<path d="M178.500 988 L181 985 H188 L185.500 988 Z" fill="#dce8f6"/><rect x="178.500" y="988" width="7" height="11" fill="#a8c4e6"/><rect x="178.500" y="996.500" width="7" height="2.500" fill="#dde2ea"/>
<path d="M178.500 988 H185.500 L188 985 M185.500 988 V999 M178.500 988 L181 985 H188 V996 L185.500 999 H178.500 Z" fill="none" stroke="#2a3a55" stroke-width=".8" stroke-linejoin="round"/>
<path d="M191.500 998.500 V985.500 M189.500 987.800 L191.500 985.300 L193.500 987.800" stroke="#2a2a2a" stroke-width="1" fill="none"/>
</g>
<!-- move -->
<g fill="#4a4a4a" stroke="none">
<path d="M234 984.300 L237 987.800 H235 V990 H233 V987.800 H231 Z"/>
<path d="M234 999.700 L237 996.200 H235 V994 H233 V996.200 H231 Z"/>
<path d="M226.300 992 L229.800 989 V991 H232 V993 H229.800 V995 Z"/>
<path d="M241.700 992 L238.200 989 V991 H236 V993 H238.200 V995 Z"/>
</g>
<rect x="232.500" y="990.500" width="3" height="3" fill="#f0f0f0" stroke="#4a4a4a" stroke-width=".8"/>
<!-- marker -->
<path d="M240 978.500 H252 V981.500 L247.200 986.500 H245 L240 981.500 Z" fill="#6a6a6a"/>
<rect x="245" y="985" width="2.200" height="25" fill="#6a6a6a"/>
<path d="M163 1004 V1009 H234.500 V1004 M186.500 1004 V1009 M210.500 1004 V1009" stroke="#707070" stroke-width="2" fill="none"/>
<!-- gear -->
<g transform="translate(1653.800 990.800)">
<circle r="6.500" fill="none" stroke="#585858" stroke-width="3" stroke-dasharray="3.100 2.005" stroke-dashoffset="1.550"/>
<circle r="4.150" fill="none" stroke="#585858" stroke-width="3.500"/>
</g>
</svg>
<!--TIMELINE-E-->
<!--TASKBAR-S-->
<div class="abs" style="left:0;top:1024px;width:1680px;height:1px;background:#6f6f6f"></div>
<div class="abs" id="wall" style="left:0;top:1025px;width:1680px;height:25px;background:linear-gradient(90deg,#474d44 0%,#4c5045 35%,#4a5046 60%,#444d4a 75%,#3b474b 87%,#38444a 100%)"></div>
<svg style="left:0;top:1025px" width="1680" height="25" viewBox="0 0 1680 25">
<defs>
<filter id="noise" x="0" y="0" width="100%" height="100%" color-interpolation-filters="sRGB">
<feTurbulence type="fractalNoise" baseFrequency="0.22" numOctaves="2" seed="7" result="n"/>
<feColorMatrix in="n" type="matrix" values="0 0 0 0 0.30  0 0 0 0 0.52  0 0 0 0 0.72  0 0 7 0 -4.5"/>
</filter>
<filter id="noise2" x="0" y="0" width="100%" height="100%" color-interpolation-filters="sRGB">
<feTurbulence type="fractalNoise" baseFrequency="0.045" numOctaves="2" seed="3" result="n"/>
<feColorMatrix in="n" type="matrix" values="0 0 0 0 0.33  0 0 0 0 0.42  0 0 0 0 0.50  0 3 0 0 -1.6"/>
</filter>
</defs>
<rect width="1680" height="25" filter="url(#noise2)" opacity=".2"/>
<rect width="1680" height="25" filter="url(#noise)" opacity=".6"/>
</svg>
<div class="abs" id="tbov" style="left:0;top:1010px;width:1680px;height:15px;background:rgba(86,86,86,.53);border-top:1px solid rgba(60,60,60,.25)"></div>
<div class="tbtn" style="left:176px;background:rgba(255,255,255,.13);border-color:rgba(255,255,255,.42)"></div>
<div class="tbtn" style="left:362px;background:rgba(255,255,255,.16);border-color:rgba(255,255,255,.45)"></div>
<div class="tbtn" style="left:424px;background:rgba(255,255,255,.30);border-color:rgba(255,255,255,.9);box-shadow:inset 0 0 0 1px rgba(255,255,255,.25)"></div>
<svg style="left:0;top:1010px" width="1680" height="40" viewBox="0 1010 1680 40">
<defs>
 <linearGradient id="ieb" x1="0" y1="0" x2="0" y2="1"><stop offset="0" stop-color="#6fd0f8"/><stop offset="1" stop-color="#1a86d8"/></linearGradient>
 <linearGradient id="fold" x1="0" y1="0" x2="0" y2="1"><stop offset="0" stop-color="#fbe9a6"/><stop offset="1" stop-color="#f2cf6a"/></linearGradient>
 <linearGradient id="stand" x1="0" y1="0" x2="0" y2="1"><stop offset="0" stop-color="#c9f0fc"/><stop offset="1" stop-color="#4aa6d8"/></linearGradient>
 <radialGradient id="ffo" cx="0.550" cy="0.300" r="0.800"><stop offset="0" stop-color="#ffe14a"/><stop offset="0.450" stop-color="#ff9a1a"/><stop offset="1" stop-color="#e2451a"/></radialGradient>
 <radialGradient id="ffb" cx="0.400" cy="0.350" r="0.700"><stop offset="0" stop-color="#4ab0e8"/><stop offset="1" stop-color="#14357e"/></radialGradient>
 <radialGradient id="tbg" cx="0.400" cy="0.300" r="0.800"><stop offset="0" stop-color="#5aa8e8"/><stop offset="1" stop-color="#143c8a"/></radialGradient>
 <linearGradient id="fxo" x1="0" y1="1" x2="1" y2="0"><stop offset="0" stop-color="#f05a10"/><stop offset="0.600" stop-color="#ff9a10"/><stop offset="1" stop-color="#ffe23a"/></linearGradient>
 <linearGradient id="fxw" x1="0" y1="0" x2="1" y2="1"><stop offset="0" stop-color="#ffffff"/><stop offset="1" stop-color="#b8b8b8"/></linearGradient>
 <linearGradient id="fus" x1="0" y1="0" x2="0" y2="1"><stop offset="0" stop-color="#c6e4f6"/><stop offset="0.620" stop-color="#d8eefa"/><stop offset="0.640" stop-color="#e8f5fc"/><stop offset="1" stop-color="#eef8fd"/></linearGradient>
 <linearGradient id="fuo" x1="0" y1="0" x2="1" y2="1"><stop offset="0" stop-color="#f7a83e"/><stop offset="1" stop-color="#d56f18"/></linearGradient>
</defs>
<!-- start -->
<path d="M10.800 1020.500 L22.400 1019 V1029.400 H10.800 Z M23.600 1018.800 L37.200 1016.400 V1029.400 H23.600 Z M10.800 1030.600 H22.400 V1040.400 L10.800 1038.800 Z M23.600 1030.600 H37.200 V1042.500 L23.600 1040.600 Z" fill="#ffffff"/>
<!-- IE -->
<text transform="translate(68.600 1043.600) scale(1.170 1.030)" font-family="'Liberation Sans',sans-serif" font-weight="bold" font-size="47" fill="url(#ieb)" stroke="#1a7acc" stroke-width=".5">e</text>
<path d="M95 1016.200 C87 1011.500 68 1024 66.800 1036.500 C66.300 1043.500 73 1044.500 77 1041.200" fill="none" stroke="#f4c020" stroke-width="3" stroke-linecap="round"/>
<path d="M95 1016.200 C87 1011.500 68 1024 66.800 1036.500" fill="none" stroke="#fbe27a" stroke-width="1" stroke-linecap="round"/>
<!-- explorer -->
<path d="M128 1021 Q128 1019 130 1019 H139 L141 1021.500 H157 Q159 1021.500 159 1023.500 V1041 Q159 1043 157 1043 H130 Q128 1043 128 1041 Z" fill="url(#fold)" stroke="#d8b048" stroke-width=".8"/>
<path d="M136 1018.500 H146 V1021 H136 Z M145 1020.500 H155 V1023 H145 Z" fill="#fdfdf6"/>
<rect x="131.500" y="1017.700" width="3" height="2" fill="#18b030"/><rect x="139.500" y="1019.700" width="3" height="2" fill="#e03020"/><rect x="147.500" y="1021.700" width="3" height="2" fill="#1890f0"/>
<path d="M128.500 1026 H158.500" stroke="#f8e08a" stroke-width="1"/>
<path d="M131.500 1046 V1036 Q131.500 1033 134.500 1033 H152 Q155 1033 155 1036 V1046 H149 V1039.500 H137.500 V1046 Z" fill="url(#stand)" stroke="#3a94cc" stroke-width=".8"/>
<path d="M134.500 1028 L135.800 1034 L141 1035.300 L135.800 1036.600 L134.500 1042 L133.200 1036.600 L129 1035.300 L133.200 1034 Z" fill="#ffffff" opacity=".85"/>
<!-- firefox -->
<circle cx="205" cy="1031" r="14.600" fill="url(#ffo)"/>
<circle cx="207.500" cy="1028.600" r="8.600" fill="url(#ffb)"/>
<path d="M191.500 1024 C194 1020.500 198 1020 200.500 1022.500 C203.500 1022.500 204.500 1025 202.500 1026.500 C199.500 1027.500 199.500 1030.500 202 1032.500 C205.500 1034.500 209 1033 211 1031.500 C210.500 1036.500 206.500 1039.500 202 1039 C195 1038 190.500 1031.500 191.500 1024 Z" fill="#ee6a18"/>
<path d="M200.500 1022.500 C202 1021.300 204 1021.300 205 1022 C203.800 1022.800 203 1023.600 202.800 1024.600 Z" fill="#f8a020"/>
<path d="M192.300 1019.500 L195.500 1021.200 L192 1024.500 Z" fill="#ee6a18"/>
<path d="M216 1021.500 C219.800 1026 220.500 1033 217.500 1038.500 C218.500 1033 218 1027 214.500 1022.500 Z" fill="#ffe65a"/>
<!-- thunderbird -->
<path d="M254.300 1037.500 C250 1027 256 1016 267 1015.300 C277 1015 283 1023 282.800 1031 C282.500 1039 276 1045 268.500 1045.300 C272.500 1041.500 275.500 1036 273.500 1029.500 C271.500 1024.500 264 1022.500 258.500 1025.500 C256.300 1028.500 255.300 1033 254.300 1037.500 Z" fill="url(#tbg)"/>
<path d="M262 1017 C270 1015.500 279 1020 280.500 1030 C281 1036 278 1041 274 1043.500 C277 1038 277.500 1031 274.500 1026 C271.500 1021.500 266 1020.500 262 1021 Z" fill="#3f8fe0" opacity=".75"/>
<path d="M254.700 1030.800 L258 1024.500 L272.300 1028 L273.800 1036.800 L270.500 1040.800 L255.800 1035.200 Z" fill="#f1eee8"/>
<path d="M258 1024.500 L263.500 1032.500 L272.300 1028 M263.500 1032.500 L270.500 1040.800" stroke="#b0a898" stroke-width=".8" fill="none"/>
<path d="M254.700 1030.800 L263.500 1032.500" stroke="#c8c0b0" stroke-width=".7"/>
<path d="M258 1020 C260 1017.500 264 1017.500 266.500 1020 C266 1023 263.500 1025.500 260.500 1026 L258.300 1024.200 Z" fill="#1f55aa"/>
<path d="M257.700 1022.500 L260.200 1023 L259 1026.500 Z" fill="#c8ccd4"/>
<circle cx="261.300" cy="1021.600" r=".9" fill="#f8b020"/>
<!-- chrome -->
<circle cx="329.200" cy="1030" r="14.600" fill="#e04a3a"/>
<path d="M329.200 1030 L316.560 1022.700 A14.600 14.600 0 0 0 321.900 1042.640 Z" fill="#1ea362"/>
<path d="M329.200 1030 L316.560 1022.700 A14.600 14.600 0 0 0 329.200 1044.600 L336 1034 Z" fill="#1ea362"/>
<path d="M329.200 1044.600 A14.600 14.600 0 0 0 343.300 1026.200 L329.200 1026.200 L336.500 1033 Z" fill="#fccd35"/>
<circle cx="329.200" cy="1030" r="7.100" fill="#ffffff"/><circle cx="329.200" cy="1030" r="5.500" fill="#4a8af4"/>
<!-- foxit-like -->
<rect x="375.500" y="1014.500" width="31" height="31" rx="4" fill="url(#fxw)" stroke="#1a5a98" stroke-width="2"/>
<path d="M377 1026 C380 1021 384 1019 388 1023 C392 1018 398 1016 404 1017 V1020 C398 1020 393 1023 390 1028 C386 1024 381 1026 377 1030 Z" fill="#3a8ad8"/>
<path d="M379 1044 C382 1036 388 1032 392 1035 C395 1027 400 1022 405.500 1020 V1030 C400 1032 397 1037 394 1043 C390 1040 385 1041 383 1044.500 Z" fill="url(#fxo)"/>
<!-- fusion -->
<rect x="437" y="1014" width="32" height="32" fill="url(#fus)"/>
<path d="M447 1020.500 Q447 1018 450 1018 L460.500 1017.500 V1022.500 L453.500 1022.800 V1027 L459.500 1026.800 V1031.300 L453.500 1031.500 V1040 L447 1038.800 Z" fill="url(#fuo)"/>
<path d="M447 1020.500 Q447 1018 450 1018 L450.800 1018 L449.500 1039.300 L447 1038.800 Z" fill="#c8661a" opacity=".6"/>
<text x="455.500" y="1044.300" font-family="'Liberation Sans',sans-serif" font-weight="bold" font-size="5.500" fill="#0a8ad8">360</text>
<!-- tray -->
<path d="M1421 1033 L1425 1029 L1429 1033 Z" fill="#ffffff"/>
<rect x="1441" y="1023" width="16" height="16" rx="2" fill="#ffffff"/>
<text x="1442.200" y="1037" font-family="'Liberation Sans',sans-serif" font-weight="bold" font-size="14.500" fill="#1a2a9a" textLength="13" lengthAdjust="spacingAndGlyphs">ti</text>
<circle cx="1453.300" cy="1025.800" r="1.600" fill="#28d028"/>
<g fill="#7ad028" stroke="#3a9010" stroke-width=".5">
<ellipse cx="1472.300" cy="1026.600" rx="2.300" ry="3.400"/><ellipse cx="1472.300" cy="1035.400" rx="2.300" ry="3.400"/><ellipse cx="1467.900" cy="1031" rx="3.400" ry="2.300"/><ellipse cx="1476.700" cy="1031" rx="3.400" ry="2.300"/>
<ellipse cx="1469.200" cy="1027.900" rx="2.300" ry="3.200" transform="rotate(-45 1469.200 1027.900)"/><ellipse cx="1475.400" cy="1027.900" rx="2.300" ry="3.200" transform="rotate(45 1475.400 1027.900)"/><ellipse cx="1469.200" cy="1034.100" rx="2.300" ry="3.200" transform="rotate(45 1469.200 1034.100)"/><ellipse cx="1475.400" cy="1034.100" rx="2.300" ry="3.200" transform="rotate(-45 1475.400 1034.100)"/>
</g>
<circle cx="1472.300" cy="1031" r="1.800" fill="#f8e020"/>
<g fill="#ffffff"><path d="M1493 1023.500 L1497 1026 L1493 1028.500 L1489 1026 Z M1501 1023.500 L1505 1026 L1501 1028.500 L1497 1026 Z M1493 1028.500 L1497 1031 L1493 1033.500 L1489 1031 Z M1501 1028.500 L1505 1031 L1501 1033.500 L1497 1031 Z M1493 1034.500 L1497 1032 L1501 1034.500 L1497 1037.200 Z"/></g>
<circle cx="1500.700" cy="1035.300" r="3.600" fill="#38b048" stroke="#e8f8e8" stroke-width=".6"/><path d="M1498.800 1035.400 L1500.300 1036.800 L1502.700 1033.900" stroke="#fff" stroke-width="1" fill="none"/>
<g fill="none" stroke="#ffffff" stroke-width="1.300"><rect x="1518" y="1025.500" width="10" height="8"/><path d="M1523 1033.500 V1036.500 M1519.500 1037 H1526.500"/><rect x="1513.500" y="1023.500" width="3.600" height="5.500" rx="1.500"/><path d="M1515.300 1029 V1037"/></g>
<path d="M1538 1028.500 H1541 L1545 1024.500 V1037.500 L1541 1033.500 H1538 Z" fill="#ffffff"/>
<path d="M1547.200 1028.500 Q1548.700 1031 1547.200 1033.500 M1549.500 1026.500 Q1552.200 1031 1549.500 1035.500" stroke="#ffffff" stroke-width="1.100" fill="none"/>
</svg>
<div class="t" style="left:1567.300px;top:1024.500px;font-size:11.500px;color:#ffffff;line-height:13px;letter-spacing:-0.800px">ENG</div>
<div class="t" style="left:1621.500px;top:1016.500px;font-size:11.500px;color:#ffffff;line-height:13px;letter-spacing:-0.450px">17:01</div>
<div class="t" style="left:1607.500px;top:1032.700px;font-size:11.500px;color:#ffffff;line-height:13px;letter-spacing:-0.450px">29.09.2016</div>
<div class="abs" style="left:1679px;top:1010px;width:1px;height:15px;background:#3a4856"></div>
<!--TASKBAR-E-->
<!--ANNOT-S-->
<svg style="left:0;top:0" width="1680" height="1050" viewBox="0 0 1680 1050">
<rect x="592.500" y="76.400" width="79" height="82.100" rx="9.500" fill="none" stroke="#ff0fc3" stroke-width="7"/>
<g stroke="#ed1c24" stroke-width="5" stroke-linecap="round" fill="none">
<path d="M444.300 489 L522 687"/>
<path d="M449.500 577.300 L582.500 561.500"/>
<path d="M473.600 631.500 L582.500 607.800"/>
<path d="M480.600 547.700 L480.200 574.500 L453.400 559.100"/>
<path d="M490 653.300 L499 626.800 L529.200 649.400"/>
</g>
<text x="427.500" y="617.300" font-family="'Liberation Sans',sans-serif" font-size="25.500" fill="#ed1c24" stroke="#ededed" stroke-width=".35">?</text>
<g stroke="#000000" fill="none" stroke-linecap="round">
<path d="M314.600 838.400 L235.300 974" stroke-width="5.800"/>
<ellipse cx="212.350" cy="995" rx="80.750" ry="22.250" stroke-width="5.500"/>
</g>
</svg>
<div class="t" id="note1" style="letter-spacing:-0.155px;left:329px;top:815px;font-size:16.700px;font-weight:bold;color:#000000;line-height:20px;transform-origin:left top">Тут история действий, можно проверить</div>
<div class="t" id="note2" style="left:329px;top:837.600px;font-size:16.700px;font-weight:bold;color:#000000;line-height:20px;transform-origin:left top">и изменить параметры</div>
<!--ANNOT-E-->
</body>
</html>
